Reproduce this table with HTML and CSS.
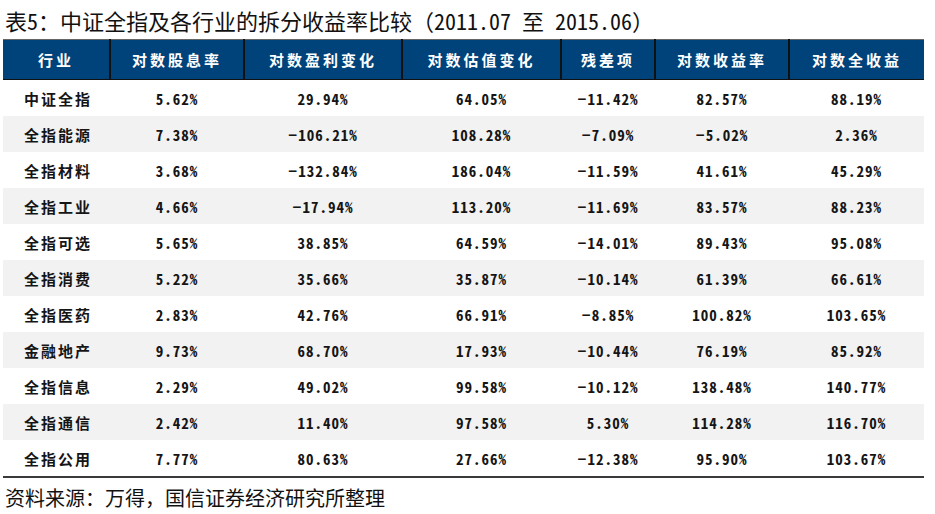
FILE: index.html
```html
<!DOCTYPE html>
<html lang="zh-CN">
<head>
<meta charset="utf-8">
<link rel="stylesheet" href="styles.css">
</head>
<body>
<div class="page">
  <h1 class="title">表5：中证全指及各行业的拆分收益率比较（2011.07 至 2015.06）</h1>
  <table class="data">
    <colgroup>
      <col class="c1"><col class="c2"><col class="c3"><col class="c4"><col class="c5"><col class="c6"><col class="c7">
    </colgroup>
    <thead>
      <tr><th>行业</th><th>对数股息率</th><th>对数盈利变化</th><th>对数估值变化</th><th>残差项</th><th>对数收益率</th><th>对数全收益</th></tr>
    </thead>
    <tbody>
      <tr><td>中证全指</td><td>5.62%</td><td>29.94%</td><td>64.05%</td><td>−11.42%</td><td>82.57%</td><td>88.19%</td></tr>
      <tr><td>全指能源</td><td>7.38%</td><td>−106.21%</td><td>108.28%</td><td>−7.09%</td><td>−5.02%</td><td>2.36%</td></tr>
      <tr><td>全指材料</td><td>3.68%</td><td>−132.84%</td><td>186.04%</td><td>−11.59%</td><td>41.61%</td><td>45.29%</td></tr>
      <tr><td>全指工业</td><td>4.66%</td><td>−17.94%</td><td>113.20%</td><td>−11.69%</td><td>83.57%</td><td>88.23%</td></tr>
      <tr><td>全指可选</td><td>5.65%</td><td>38.85%</td><td>64.59%</td><td>−14.01%</td><td>89.43%</td><td>95.08%</td></tr>
      <tr><td>全指消费</td><td>5.22%</td><td>35.66%</td><td>35.87%</td><td>−10.14%</td><td>61.39%</td><td>66.61%</td></tr>
      <tr><td>全指医药</td><td>2.83%</td><td>42.76%</td><td>66.91%</td><td>−8.85%</td><td>100.82%</td><td>103.65%</td></tr>
      <tr><td>金融地产</td><td>9.73%</td><td>68.70%</td><td>17.93%</td><td>−10.44%</td><td>76.19%</td><td>85.92%</td></tr>
      <tr><td>全指信息</td><td>2.29%</td><td>49.02%</td><td>99.58%</td><td>−10.12%</td><td>138.48%</td><td>140.77%</td></tr>
      <tr><td>全指通信</td><td>2.42%</td><td>11.40%</td><td>97.58%</td><td>5.30%</td><td>114.28%</td><td>116.70%</td></tr>
      <tr><td>全指公用</td><td>7.77%</td><td>80.63%</td><td>27.66%</td><td>−12.38%</td><td>95.90%</td><td>103.67%</td></tr>
    </tbody>
  </table>
  <p class="source">资料来源：万得，国信证券经济研究所整理</p>
</div>
</body>
</html>
```

FILE: styles.css
```css
html, body {
  margin: 0;
  padding: 0;
  background: #ffffff;
}

.page {
  padding: 6px 0 0 3px;
  width: 921px;
  font-family: "Noto Sans CJK SC", "Noto Sans", sans-serif;
  color: #111111;
}

.title {
  margin: 0 0 5px 2px;
  font-family: "Noto Sans Mono CJK SC", "Noto Sans CJK SC", sans-serif;
  font-size: 22px;
  font-weight: 400;
  line-height: 28px;
  white-space: nowrap;
}

.data {
  width: 921px;
  border-collapse: collapse;
  table-layout: fixed;
  font-family: "Noto Sans Mono CJK SC", "Noto Sans CJK SC", sans-serif;
  font-size: 15px;
  border-top: 1px solid #666666;
  border-bottom: 2px solid #3a3a3a;
}

.c1 { width: 107px; }
.c2 { width: 134px; }
.c3 { width: 158px; }
.c4 { width: 159px; }
.c5 { width: 94px; }
.c6 { width: 134px; }
.c7 { width: 135px; }

.data th {
  height: 39px;
  padding: 0;
  background: #00437a;
  color: #ffffff;
  font-weight: 700;
  letter-spacing: 3px;
  text-align: center;
  border-left: 2px solid #111111;
  border-bottom: 1px solid #111111;
}

.data th:first-child {
  border-left: none;
}

.data td {
  height: 36px;
  padding: 0;
  text-align: center;
  font-weight: 700;
  letter-spacing: 1px;
  color: #151515;
}

.data td:first-child {
  text-align: left;
  padding-left: 21px;
  letter-spacing: 2px;
}

.data tbody tr:nth-child(even) td {
  background: #f2f2f2;
}

.source {
  margin: 6px 0 0 2px;
  font-size: 20px;
  line-height: 28px;
  white-space: nowrap;
}
```
